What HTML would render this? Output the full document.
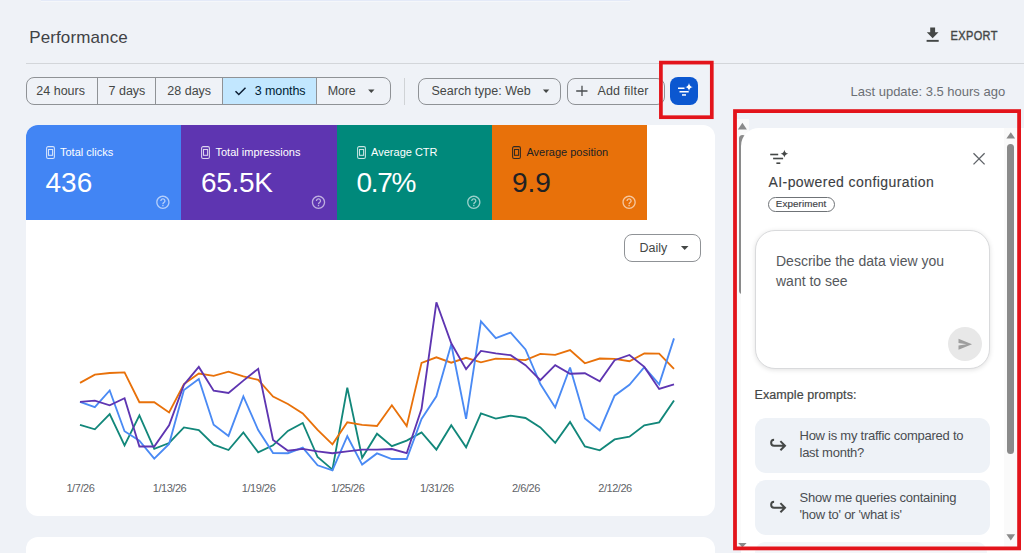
<!DOCTYPE html>
<html><head><meta charset="utf-8"><style>
html,body{margin:0;padding:0;}
body{width:1024px;height:553px;overflow:hidden;position:relative;background:#eff2f7;font-family:"Liberation Sans", sans-serif;}
.t{position:absolute;white-space:nowrap;line-height:1;}
svg{overflow:visible;}
</style></head><body>
<div style="position:absolute;left:41.00px;top:0.00px;width:589.00px;height:1.10px;background:#e4eaf8;"></div>
<div style="position:absolute;left:41.00px;top:1.20px;width:589.00px;height:0.90px;background:#f5f7fa;"></div>
<div class="t" style="left:29.20px;top:29.21px;font-size:17px;color:#3f4246;letter-spacing:0.12px;">Performance</div>
<div style="position:absolute;left:26.00px;top:62.50px;width:1000.00px;height:1.00px;background:#d3d6da;"></div>
<svg style="position:absolute;left:925px;top:26px;" width="16" height="18" viewBox="0 0 16 18"><path d="M5.2 1.6H10.1V6.2H13.5L7.65 12.3 1.8 6.2H5.2z" fill="#444746"/><rect x="1.6" y="13.9" width="12.1" height="1.9" fill="#444746"/></svg>
<div class="t" style="left:950.60px;top:30.69px;font-size:11px;color:#444746;letter-spacing:0.35px;-webkit-text-stroke:0.35px #444746;transform:scaleY(1.11);transform-origin:0 9.3px;">EXPORT</div>
<div style="position:absolute;left:25.50px;top:77.00px;width:365.00px;height:28.00px;box-sizing:border-box;border:1px solid #8f9296;border-radius:8px;"></div>
<div style="position:absolute;left:223.00px;top:78.00px;width:93.50px;height:26.00px;background:#c2e7ff;"></div>
<div style="position:absolute;left:97.00px;top:78.00px;width:1.00px;height:26.00px;background:#8f9296;"></div>
<div style="position:absolute;left:155.00px;top:78.00px;width:1.00px;height:26.00px;background:#8f9296;"></div>
<div style="position:absolute;left:222.00px;top:78.00px;width:1.00px;height:26.00px;background:#8f9296;"></div>
<div style="position:absolute;left:316.00px;top:78.00px;width:1.00px;height:26.00px;background:#8f9296;"></div>
<div class="t" style="left:36.30px;top:85.02px;font-size:12.5px;color:#444746;letter-spacing:0px;">24 hours</div>
<div class="t" style="left:108.50px;top:85.02px;font-size:12.5px;color:#444746;letter-spacing:0px;">7 days</div>
<div class="t" style="left:167.30px;top:85.02px;font-size:12.5px;color:#444746;letter-spacing:0px;">28 days</div>
<svg style="position:absolute;left:234px;top:85px;" width="13" height="12" viewBox="0 0 13 12"><path d="M1.5 6.2l3.3 3.3L11.5 2.8" fill="none" stroke="#0b1d33" stroke-width="1.5"/></svg>
<div class="t" style="left:254.80px;top:85.02px;font-size:12.5px;color:#001d35;letter-spacing:-0.1px;">3 months</div>
<div class="t" style="left:327.80px;top:85.02px;font-size:12.5px;color:#444746;letter-spacing:-0.2px;">More</div>
<svg style="position:absolute;left:367px;top:89px;" width="8" height="5" viewBox="0 0 8 5"><path d="M1.1 0.6H7.5L4.3 4z" fill="#444746"/></svg>
<div style="position:absolute;left:404.00px;top:77.50px;width:1.00px;height:27.50px;background:#d0d3d6;"></div>
<div style="position:absolute;left:418.00px;top:77.50px;width:143.00px;height:27.50px;box-sizing:border-box;border:1px solid #8f9296;border-radius:8px;"></div>
<div class="t" style="left:431.50px;top:85.02px;font-size:12.5px;color:#444746;letter-spacing:0px;">Search type: Web</div>
<svg style="position:absolute;left:542px;top:89px;" width="8" height="5" viewBox="0 0 8 5"><path d="M0.9 0.6H7.3L4.1 4z" fill="#444746"/></svg>
<div style="position:absolute;left:567.00px;top:77.50px;width:98.00px;height:27.50px;box-sizing:border-box;border:1px solid #8f9296;border-radius:8px;"></div>
<svg style="position:absolute;left:575px;top:84px;" width="14" height="14" viewBox="0 0 14 14"><path d="M7 1.8v10.1M1.2 7h11.3" stroke="#4a4d50" stroke-width="1.3"/></svg>
<div class="t" style="left:597.40px;top:85.02px;font-size:12.5px;color:#444746;letter-spacing:0.2px;">Add filter</div>
<div style="position:absolute;left:670.30px;top:77.20px;width:27.70px;height:27.70px;background:#0b57d0;border-radius:8px;"></div>
<svg style="position:absolute;left:670px;top:77px;" width="28" height="28" viewBox="0 0 28 28"><g fill="#fff"><rect x="8" y="10.5" width="6.5" height="1.5"/><rect x="9.5" y="14" width="9.2" height="1.5"/><rect x="12" y="17.2" width="4" height="1.5"/><path d="M19 5.9 Q19.5 9.5 22.9 10 Q19.5 10.5 19 14.1 Q18.5 10.5 15.1 10 Q18.5 9.5 19 5.9z"/></g></svg>
<div class="t" style="left:850.50px;top:85.10px;font-size:13px;color:#6b6f74;letter-spacing:0px;">Last update: 3.5 hours ago</div>
<div style="position:absolute;left:25.50px;top:125.00px;width:689.50px;height:391.00px;background:#fff;border-radius:12px;"></div>
<div style="position:absolute;left:25.50px;top:537.40px;width:689.50px;height:40.00px;background:#fff;border-radius:12px;"></div>
<div style="position:absolute;left:25.50px;top:125.00px;width:155.50px;height:95.20px;background:#4285f4;border-top-left-radius:12px;"></div>
<svg style="position:absolute;left:46px;top:145px;" width="10" height="15" viewBox="0 0 10 15"><rect x="0.6" y="1.6" width="7.8" height="11.9" rx="1.5" fill="none" stroke="rgba(255,255,255,0.78)" stroke-width="1.05"/><rect x="2.5" y="4.5" width="4.1" height="5.8" fill="none" stroke="rgba(255,255,255,0.78)" stroke-width="1.05"/></svg>
<div class="t" style="left:60.00px;top:147.29px;font-size:11px;color:#fff;letter-spacing:0px;">Total clicks</div>
<div class="t" style="left:45.50px;top:168.70px;font-size:28px;color:#fff;letter-spacing:0px;">436</div>
<svg style="position:absolute;left:0px;top:0px;" width="1" height="1" viewBox="0 0 1 1"><g transform="translate(154.86,194.26) scale(0.67)"><path fill="rgba(255,255,255,0.6)" d="M11 18h2v-2h-2v2zm1-16C6.48 2 2 6.48 2 12s4.48 10 10 10 10-4.48 10-10S17.52 2 12 2zm0 18c-4.41 0-8-3.59-8-8s3.59-8 8-8 8 3.59 8 8-3.59 8-8 8zm0-14c-2.210 0-4 1.79-4 4h2c0-1.1.9-2 2-2s2 .9 2 2c0 2-3 1.75-3 5h2c0-2.25 3-2.5 3-5 0-2.21-1.79-4-4-4z"/></g></svg>
<div style="position:absolute;left:181.00px;top:125.00px;width:155.60px;height:95.20px;background:#5e35b1;"></div>
<svg style="position:absolute;left:201px;top:145px;" width="10" height="15" viewBox="0 0 10 15"><rect x="0.6" y="1.6" width="7.8" height="11.9" rx="1.5" fill="none" stroke="rgba(255,255,255,0.78)" stroke-width="1.05"/><rect x="2.5" y="4.5" width="4.1" height="5.8" fill="none" stroke="rgba(255,255,255,0.78)" stroke-width="1.05"/></svg>
<div class="t" style="left:215.50px;top:147.29px;font-size:11px;color:#fff;letter-spacing:0px;">Total impressions</div>
<div class="t" style="left:201.00px;top:168.70px;font-size:28px;color:#fff;letter-spacing:-0.3px;">65.5K</div>
<svg style="position:absolute;left:0px;top:0px;" width="1" height="1" viewBox="0 0 1 1"><g transform="translate(310.46,194.26) scale(0.67)"><path fill="rgba(255,255,255,0.6)" d="M11 18h2v-2h-2v2zm1-16C6.48 2 2 6.48 2 12s4.48 10 10 10 10-4.48 10-10S17.52 2 12 2zm0 18c-4.41 0-8-3.59-8-8s3.59-8 8-8 8 3.59 8 8-3.59 8-8 8zm0-14c-2.210 0-4 1.79-4 4h2c0-1.1.9-2 2-2s2 .9 2 2c0 2-3 1.75-3 5h2c0-2.25 3-2.5 3-5 0-2.21-1.79-4-4-4z"/></g></svg>
<div style="position:absolute;left:336.60px;top:125.00px;width:155.30px;height:95.20px;background:#00897b;"></div>
<svg style="position:absolute;left:357px;top:145px;" width="10" height="15" viewBox="0 0 10 15"><rect x="0.6" y="1.6" width="7.8" height="11.9" rx="1.5" fill="none" stroke="rgba(255,255,255,0.78)" stroke-width="1.05"/><rect x="2.5" y="4.5" width="4.1" height="5.8" fill="none" stroke="rgba(255,255,255,0.78)" stroke-width="1.05"/></svg>
<div class="t" style="left:371.10px;top:147.29px;font-size:11px;color:#fff;letter-spacing:0px;">Average CTR</div>
<div class="t" style="left:356.60px;top:168.70px;font-size:28px;color:#fff;letter-spacing:-1.3px;">0.7%</div>
<svg style="position:absolute;left:0px;top:0px;" width="1" height="1" viewBox="0 0 1 1"><g transform="translate(465.76,194.26) scale(0.67)"><path fill="rgba(255,255,255,0.6)" d="M11 18h2v-2h-2v2zm1-16C6.48 2 2 6.48 2 12s4.48 10 10 10 10-4.48 10-10S17.52 2 12 2zm0 18c-4.41 0-8-3.59-8-8s3.59-8 8-8 8 3.59 8 8-3.59 8-8 8zm0-14c-2.210 0-4 1.79-4 4h2c0-1.1.9-2 2-2s2 .9 2 2c0 2-3 1.75-3 5h2c0-2.25 3-2.5 3-5 0-2.21-1.79-4-4-4z"/></g></svg>
<div style="position:absolute;left:491.90px;top:125.00px;width:155.30px;height:95.20px;background:#e8710a;"></div>
<svg style="position:absolute;left:512px;top:145px;" width="10" height="15" viewBox="0 0 10 15"><rect x="0.6" y="1.6" width="7.8" height="11.9" rx="1.5" fill="none" stroke="rgba(32,33,36,0.9)" stroke-width="1.05"/><rect x="2.5" y="4.5" width="4.1" height="5.8" fill="none" stroke="rgba(32,33,36,0.9)" stroke-width="1.05"/></svg>
<div class="t" style="left:526.40px;top:147.29px;font-size:11px;color:#202124;letter-spacing:0px;">Average position</div>
<div class="t" style="left:511.90px;top:168.70px;font-size:28px;color:#202124;letter-spacing:0px;">9.9</div>
<svg style="position:absolute;left:0px;top:0px;" width="1" height="1" viewBox="0 0 1 1"><g transform="translate(621.06,194.26) scale(0.67)"><path fill="rgba(255,255,255,0.6)" d="M11 18h2v-2h-2v2zm1-16C6.48 2 2 6.48 2 12s4.48 10 10 10 10-4.48 10-10S17.52 2 12 2zm0 18c-4.41 0-8-3.59-8-8s3.59-8 8-8 8 3.59 8 8-3.59 8-8 8zm0-14c-2.210 0-4 1.79-4 4h2c0-1.1.9-2 2-2s2 .9 2 2c0 2-3 1.75-3 5h2c0-2.25 3-2.5 3-5 0-2.21-1.79-4-4-4z"/></g></svg>
<div style="position:absolute;left:624.30px;top:234.10px;width:77.00px;height:27.60px;box-sizing:border-box;border:1px solid #8f9296;border-radius:8px;background:#fff;"></div>
<div class="t" style="left:639.50px;top:241.62px;font-size:12.5px;color:#444746;letter-spacing:0px;">Daily</div>
<svg style="position:absolute;left:680px;top:245px;" width="9" height="6" viewBox="0 0 9 6"><path d="M0.9 1H8.5L4.7 4.9z" fill="#444746"/></svg>
<div class="t" style="left:40.40px;width:80px;text-align:center;top:483.19px;font-size:11px;color:#5f6368;letter-spacing:-0.45px;">1/7/26</div>
<div class="t" style="left:129.50px;width:80px;text-align:center;top:483.19px;font-size:11px;color:#5f6368;letter-spacing:-0.45px;">1/13/26</div>
<div class="t" style="left:218.60px;width:80px;text-align:center;top:483.19px;font-size:11px;color:#5f6368;letter-spacing:-0.45px;">1/19/26</div>
<div class="t" style="left:307.70px;width:80px;text-align:center;top:483.19px;font-size:11px;color:#5f6368;letter-spacing:-0.45px;">1/25/26</div>
<div class="t" style="left:396.80px;width:80px;text-align:center;top:483.19px;font-size:11px;color:#5f6368;letter-spacing:-0.45px;">1/31/26</div>
<div class="t" style="left:485.90px;width:80px;text-align:center;top:483.19px;font-size:11px;color:#5f6368;letter-spacing:-0.45px;">2/6/26</div>
<div class="t" style="left:575.00px;width:80px;text-align:center;top:483.19px;font-size:11px;color:#5f6368;letter-spacing:-0.45px;">2/12/26</div>
<svg style="position:absolute;left:0px;top:0px;pointer-events:none;" width="1024" height="553" viewBox="0 0 1024 553"><polyline points="80.00,424.8 94.85,429.3 109.70,414.2 124.55,445.3 139.40,415.4 154.25,448.8 169.10,443.0 183.95,427.4 198.80,430.0 213.65,444.6 228.50,450.0 243.35,432.4 258.20,452.4 273.05,445.3 287.90,430.9 302.75,423.0 317.60,457.0 332.45,469.6 347.30,387.6 362.15,457.7 377.00,433.7 391.85,446.2 406.70,440.6 421.55,432.4 436.40,449.6 451.25,425.2 466.10,447.3 480.95,413.5 495.80,418.6 510.65,415.6 525.50,418.0 540.35,427.4 555.20,442.9 570.05,422.0 584.90,446.5 599.75,450.3 614.60,439.4 629.45,436.7 644.30,425.3 659.15,422.3 674.00,400.4" fill="none" stroke="#12877a" stroke-width="1.85" stroke-linejoin="miter" stroke-miterlimit="3"/><polyline points="80.00,382.9 94.85,374.7 109.70,373.0 124.55,372.4 139.40,402.2 154.25,402.2 169.10,412.4 183.95,384.1 198.80,373.5 213.65,375.9 228.50,371.6 243.35,376.4 258.20,379.9 273.05,396.6 287.90,404.0 302.75,413.4 317.60,429.9 332.45,444.3 347.30,422.3 362.15,424.8 377.00,426.0 391.85,405.3 406.70,426.1 421.55,362.9 436.40,357.3 451.25,362.7 466.10,357.8 480.95,362.3 495.80,358.7 510.65,359.2 525.50,360.1 540.35,353.9 555.20,354.8 570.05,350.1 584.90,363.3 599.75,358.5 614.60,358.8 629.45,361.2 644.30,353.4 659.15,353.7 674.00,368.9" fill="none" stroke="#e8710a" stroke-width="1.85" stroke-linejoin="miter" stroke-miterlimit="3"/><polyline points="80.00,401.8 94.85,407.2 109.70,390.5 124.55,431.2 139.40,440.6 154.25,458.7 169.10,444.0 183.95,390.0 198.80,378.9 213.65,424.8 228.50,435.9 243.35,396.4 258.20,430.0 273.05,453.0 287.90,453.2 302.75,447.6 317.60,465.3 332.45,470.4 347.30,436.2 362.15,464.6 377.00,453.4 391.85,459.0 406.70,459.0 421.55,418.9 436.40,396.3 451.25,344.2 466.10,418.9 480.95,321.3 495.80,338.2 510.65,332.6 525.50,349.4 540.35,384.1 555.20,407.4 570.05,367.5 584.90,418.5 599.75,430.4 614.60,395.7 629.45,384.8 644.30,367.2 659.15,384.3 674.00,338.4" fill="none" stroke="#4a8af4" stroke-width="1.85" stroke-linejoin="miter" stroke-miterlimit="3"/><polyline points="80.00,401.8 94.85,400.6 109.70,405.3 124.55,398.2 139.40,446.5 154.25,446.5 169.10,425.3 183.95,384.7 198.80,366.9 213.65,390.7 228.50,393.0 243.35,380.6 258.20,368.8 273.05,439.9 287.90,450.7 302.75,448.9 317.60,451.4 332.45,453.2 347.30,451.4 362.15,449.6 377.00,449.6 391.85,449.0 406.70,453.2 421.55,408.9 436.40,302.3 451.25,343.3 466.10,369.2 480.95,350.9 495.80,353.3 510.65,355.2 525.50,365.2 540.35,380.2 555.20,365.2 570.05,373.7 584.90,373.3 599.75,381.2 614.60,360.2 629.45,355.0 644.30,366.9 659.15,388.9 674.00,384.3" fill="none" stroke="#5e35b1" stroke-width="1.85" stroke-linejoin="miter" stroke-miterlimit="3"/></svg>
<div style="position:absolute;left:737.00px;top:119.00px;width:12.00px;height:430.00px;background:#fafafa;"></div>
<svg style="position:absolute;left:737px;top:121px;" width="11" height="10" viewBox="0 0 11 10"><path d="M0.9 8.4L5.4 1.8 9.9 8.4z" fill="#8a8a8a"/></svg>
<div style="position:absolute;left:738.70px;top:135.00px;width:7.00px;height:158.80px;background:#8a8a8a;border-radius:3.5px;"></div>
<div style="position:absolute;left:740.70px;top:127.80px;width:290.00px;height:430.00px;background:#fff;border-top-left-radius:18px;"></div>
<svg style="position:absolute;left:737px;top:541px;" width="11" height="8" viewBox="0 0 11 8"><path d="M1.2 2L9.6 2 5.4 6.5z" fill="#8a8a8a"/></svg>
<div style="position:absolute;left:1003.70px;top:128.00px;width:14.00px;height:420.00px;background:#fafafa;"></div>
<svg style="position:absolute;left:1004px;top:130px;" width="13" height="10" viewBox="0 0 13 10"><path d="M2.4 8.4L6.8 2.2 11.1 8.4z" fill="#8a8a8a"/></svg>
<div style="position:absolute;left:1007.00px;top:144.00px;width:7.20px;height:309.50px;background:#8a8a8a;border-radius:3.6px;"></div>
<svg style="position:absolute;left:1004px;top:532px;" width="13" height="10" viewBox="0 0 13 10"><path d="M2.4 2.2L11.1 2.2 6.8 8.4z" fill="#8a8a8a"/></svg>
<svg style="position:absolute;left:768px;top:150px;" width="20" height="16" viewBox="0 0 20 16"><g fill="#444746"><rect x="2.2" y="3.7" width="8" height="1.6"/><rect x="5.1" y="7.7" width="10" height="1.6"/><rect x="8.4" y="12.4" width="3.9" height="1.6"/><path d="M16.4 -0.2 Q16.9 3.2 20.2 3.7 Q16.9 4.2 16.4 7.6 Q15.9 4.2 12.6 3.7 Q15.9 3.2 16.4 -0.2z"/></g></svg>
<svg style="position:absolute;left:972px;top:152px;" width="14" height="14" viewBox="0 0 14 14"><path d="M1.5 1.2L12.6 12.4M12.6 1.2L1.5 12.4" stroke="#5f6368" stroke-width="1.3"/></svg>
<div class="t" style="left:768.50px;top:175.15px;font-size:14px;color:#3c4043;letter-spacing:0.42px;-webkit-text-stroke:0.12px #3c4043;">AI-powered configuration</div>
<div style="position:absolute;left:768.30px;top:197.20px;width:66.30px;height:14.70px;box-sizing:border-box;border:1px solid #6f7377;border-radius:8px;"></div>
<div class="t" style="left:775.80px;top:199.30px;font-size:9.8px;color:#3c4043;letter-spacing:0.1px;-webkit-text-stroke:0.15px #3c4043;">Experiment</div>
<div style="position:absolute;left:755.10px;top:229.50px;width:234.80px;height:139.00px;box-sizing:border-box;border:1px solid #d9dadc;border-radius:20px;background:#fff;box-shadow:0 1px 5px rgba(0,0,0,0.12);"></div>
<div class="t" style="left:776.00px;top:253.65px;font-size:14px;color:#55585c;letter-spacing:0px;">Describe the data view you</div>
<div class="t" style="left:776.00px;top:274.15px;font-size:14px;color:#55585c;letter-spacing:0px;">want to see</div>
<div style="position:absolute;left:948.40px;top:327.30px;width:34.00px;height:34.00px;background:#e8e8e8;border-radius:50%;"></div>
<svg style="position:absolute;left:955px;top:337px;" width="20" height="15" viewBox="0 0 20 15"><path d="M3.5 1.8L17 7.3 3.5 12.8 3.5 8.6 11.5 7.3 3.5 6z" fill="#9e9e9e"/></svg>
<div class="t" style="left:754.50px;top:388.92px;font-size:12.5px;color:#444746;letter-spacing:0.08px;-webkit-text-stroke:0.2px #444746;">Example prompts:</div>
<div style="position:absolute;left:754.70px;top:417.60px;width:235.30px;height:55.20px;background:#eef2f7;border-radius:11px;"></div>
<svg style="position:absolute;left:763px;top:430px;" width="30" height="30" viewBox="0 0 30 30"><path d="M11.1 9.8 A2.95 2.95 0 0 0 11.1 15.7 L22.3 15.7 M17.4 11.1 L22 15.7 L17.4 20.3" fill="none" stroke="#444746" stroke-width="2"/></svg>
<div class="t" style="left:799.50px;top:429.40px;font-size:13px;color:#4a4d51;letter-spacing:-0.25px;">How is my traffic compared to</div>
<div class="t" style="left:799.50px;top:446.00px;font-size:13px;color:#4a4d51;letter-spacing:-0.25px;">last month?</div>
<div style="position:absolute;left:754.70px;top:480.40px;width:235.30px;height:54.30px;background:#eef2f7;border-radius:11px;"></div>
<svg style="position:absolute;left:763px;top:492px;" width="30" height="30" viewBox="0 0 30 30"><path d="M11.1 9.8 A2.95 2.95 0 0 0 11.1 15.7 L22.3 15.7 M17.4 11.1 L22 15.7 L17.4 20.3" fill="none" stroke="#444746" stroke-width="2"/></svg>
<div class="t" style="left:799.50px;top:491.30px;font-size:13px;color:#4a4d51;letter-spacing:-0.25px;">Show me queries containing</div>
<div class="t" style="left:799.50px;top:508.40px;font-size:13px;color:#4a4d51;letter-spacing:-0.25px;">'how to' or 'what is'</div>
<div style="position:absolute;left:754.70px;top:542.00px;width:232.00px;height:20.00px;background:#f4f6f9;border-radius:11px;"></div>
<svg style="position:absolute;left:0px;top:0px;pointer-events:none;" width="1024" height="553" viewBox="0 0 1024 553"><rect x="660.9" y="62.6" width="50.9" height="54.6" fill="none" stroke="#e3141b" stroke-width="3.7"/><rect x="735" y="111.1" width="284.1" height="437.3" fill="none" stroke="#e3141b" stroke-width="3.8"/></svg>
</body></html>
